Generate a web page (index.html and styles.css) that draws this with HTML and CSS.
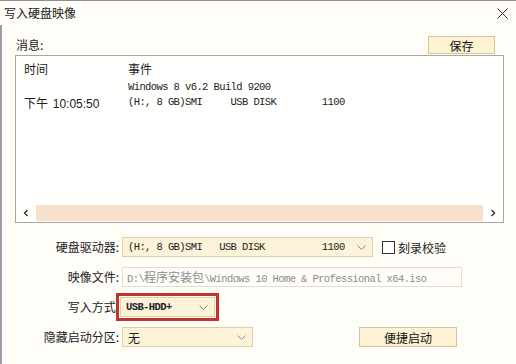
FILE: index.html
```html
<!DOCTYPE html>
<html lang="zh-CN">
<head>
<meta charset="UTF-8">
<title>写入硬盘映像</title>
<link rel="stylesheet" href="styles.css">
</head>
<body>

<div class="window">
  <div class="titlebar">
    <span class="title">写入硬盘映像</span>
    <svg class="close" width="11" height="11" viewBox="0 0 11 11">
      <path d="M0.5 0.5 L10.5 10.5 M10.5 0.5 L0.5 10.5" stroke="#333" stroke-width="1" fill="none"/>
    </svg>
  </div>

  <div class="client">
    <div class="msg-head">
      <span class="msg-label">消息:</span>
      <button class="btn save-btn">保存</button>
    </div>

    <div class="listbox">
      <div class="list-content">
        <div class="list-row list-header">
          <span class="col-time">时间</span>
          <span class="col-event">事件</span>
        </div>
        <div class="list-row">
          <span class="col-time"></span>
          <span class="col-event mono">Windows 8 v6.2 Build 9200</span>
        </div>
        <div class="list-row">
          <span class="col-time">下午 <span class="time">10:05:50</span></span>
          <span class="col-event mono">(H:, 8 GB)SMI     USB DISK        1100</span>
        </div>
      </div>
      <div class="hscroll">
        <span class="arrow">
          <svg width="6" height="8" viewBox="0 0 6 8"><path d="M4.5 1 L1.5 4 L4.5 7" stroke="#333" stroke-width="1.4" fill="none"/></svg>
        </span>
        <span class="track"></span>
        <span class="arrow">
          <svg width="6" height="8" viewBox="0 0 6 8"><path d="M1.5 1 L4.5 4 L1.5 7" stroke="#333" stroke-width="1.4" fill="none"/></svg>
        </span>
      </div>
    </div>

    <div class="form">
      <label class="field-label">硬盘驱动器:</label>
      <div class="field">
        <div class="combo combo-drive">
          <span class="mono">(H:, 8 GB)SMI   USB DISK          1100</span>
          <svg class="chev" width="9" height="5" viewBox="0 0 9 5"><path d="M0.5 0.5 L4.5 4.5 L8.5 0.5" stroke="#888" stroke-width="1" fill="none"/></svg>
        </div>
        <span class="check"><span class="box"></span>刻录校验</span>
      </div>

      <label class="field-label">映像文件:</label>
      <div class="field">
        <div class="textbox mono">D:\<span class="cjk">程序安装包</span>\Windows 10 Home &amp; Professional x64.iso</div>
      </div>

      <label class="field-label">写入方式:</label>
      <div class="field">
        <div class="mark">
          <div class="combo combo-mode">
            <span class="mono bold">USB-HDD+</span>
            <svg class="chev" width="9" height="5" viewBox="0 0 9 5"><path d="M0.5 0.5 L4.5 4.5 L8.5 0.5" stroke="#888" stroke-width="1" fill="none"/></svg>
          </div>
        </div>
      </div>

      <label class="field-label">隐藏启动分区:</label>
      <div class="field">
        <div class="combo combo-hide">
          <span>无</span>
          <svg class="chev" width="9" height="5" viewBox="0 0 9 5"><path d="M0.5 0.5 L4.5 4.5 L8.5 0.5" stroke="#888" stroke-width="1" fill="none"/></svg>
        </div>
        <button class="btn quick-btn">便捷启动</button>
      </div>
    </div>
  </div>
</div>

</body>
</html>
```

FILE: styles.css
```css
body {
  margin: 0;
  background: #fffdf7;
  font-family: "Noto Sans CJK SC", sans-serif;
  font-size: 12px;
  color: #222;
  overflow: hidden;
}

.window {
  border-top: 1px solid #978a97;
  height: 363px;
}

.titlebar {
  height: 24px;
  display: flex;
  justify-content: space-between;
  align-items: center;
  padding: 0 8px 0 4px;
}

.title {
  line-height: 14px;
  color: #1a1a1a;
}

.close {
  display: block;
}

.client {
  border-left: 2px solid #a899a9;
  padding: 0 12px 0 13px;
  height: 339px;
}

.mono {
  font-family: "Liberation Mono", monospace;
  font-size: 10.5px;
  letter-spacing: -0.6px;
  white-space: pre;
}

.bold {
  font-weight: bold;
}

.cjk {
  font-family: "Noto Sans CJK SC", sans-serif;
  font-size: 12px;
  letter-spacing: 0;
}

.msg-head {
  height: 30px;
  display: flex;
  justify-content: space-between;
  align-items: flex-end;
}

.msg-label {
  line-height: 14px;
  margin-bottom: 3px;
  margin-left: 1px;
}

.btn {
  font-family: "Noto Sans CJK SC", sans-serif;
  font-size: 12px;
  color: #111;
  background: #fdf2d4;
  border: 1px solid #d5c49c;
  padding: 0;
  line-height: 15px;
}

.save-btn {
  width: 67px;
  height: 18px;
  margin-bottom: 1px;
  margin-right: 9px;
}

.listbox {
  height: 166px;
  border: 1px solid #a9a6a0;
  background: #fffffd;
  display: flex;
  flex-direction: column;
}

.list-content {
  flex: 1;
  padding-top: 6px;
}

.list-row {
  display: flex;
  height: 15px;
  line-height: 15px;
}

.list-header {
  height: 14px;
  line-height: 14px;
  margin-bottom: 4px;
}

.col-time {
  width: 104px;
  padding-left: 8px;
}

.time {
  font-family: "Liberation Sans", sans-serif;
  font-size: 12px;
  margin-left: 2px;
}

.col-event {
  flex: 1;
}

.hscroll {
  height: 16px;
  display: flex;
  align-items: stretch;
  margin: 0 1px 1px 1px;
}

.arrow {
  width: 18px;
  display: flex;
  align-items: center;
  justify-content: center;
}

.track {
  flex: 1;
  background: #f8e1cb;
  margin: 0 1px;
}

.form {
  display: grid;
  grid-template-columns: 107px auto;
  row-gap: 10px;
  margin-top: 14px;
  align-items: center;
}

.field-label {
  text-align: right;
  padding-right: 3px;
  line-height: 14px;
}

.field {
  display: flex;
  align-items: center;
  height: 20px;
}

.combo {
  height: 18px;
  border: 1px solid #ddd0a9;
  background: #fcf3d9;
  display: flex;
  align-items: center;
  justify-content: space-between;
  padding: 0 6px 0 5px;
  box-sizing: content-box;
}

.combo-drive {
  width: 238px;
}

.combo-mode {
  width: 82px;
}

.combo-hide {
  width: 118px;
}

.chev {
  display: block;
}

.check {
  display: flex;
  align-items: center;
  margin-left: 9px;
}

.box {
  width: 11px;
  height: 11px;
  border: 1px solid #333;
  background: #fff;
  margin-right: 3px;
}

.textbox {
  width: 334px;
  height: 18px;
  line-height: 18px;
  border: 1px solid #e3ddcb;
  background: #fffef9;
  color: #8c8c8c;
  padding-left: 4px;
  overflow: hidden;
}

.textbox .cjk {
  color: #8c8c8c;
}

.mark {
  outline: 3px solid #c0352b;
  outline-offset: 1px;
  margin-left: -2px;
}

.quick-btn {
  width: 98px;
  height: 20px;
  margin-left: 106px;
}
```
